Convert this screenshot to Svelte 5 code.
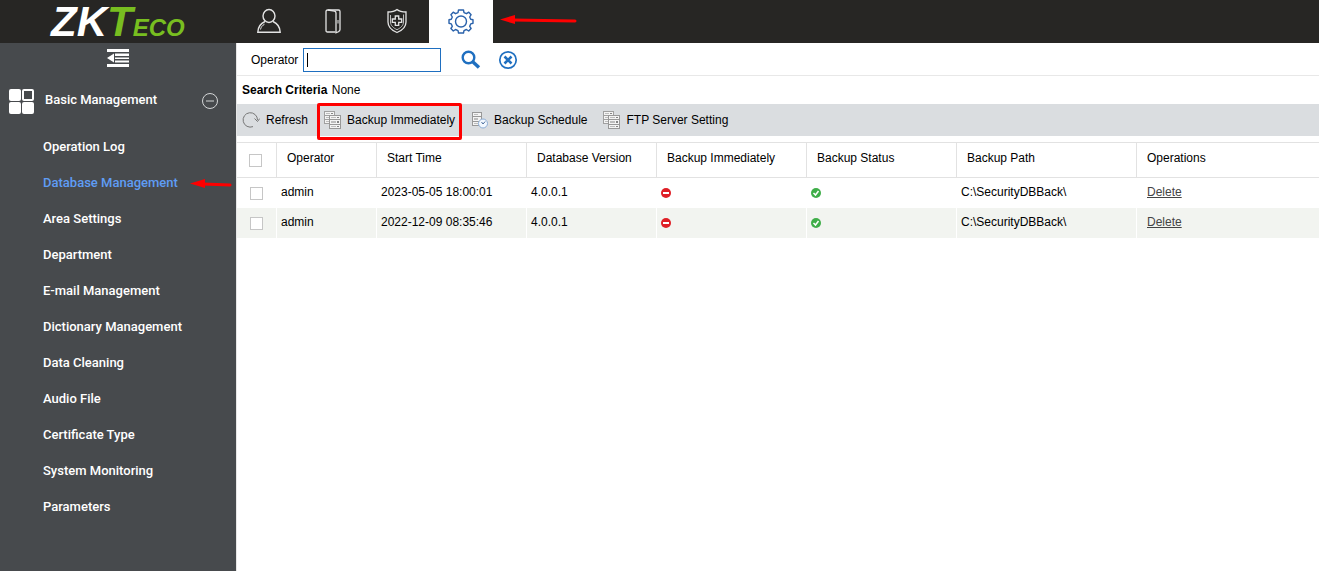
<script lang="ts">
  type BackupRow = {
    id: number;
    operator: string;
    startTime: string;
    version: string;
    path: string;
  };

  const menu = [
    "Operation Log",
    "Database Management",
    "Area Settings",
    "Department",
    "E-mail Management",
    "Dictionary Management",
    "Data Cleaning",
    "Audio File",
    "Certificate Type",
    "System Monitoring",
    "Parameters",
  ];

  const columns = [
    "Operator",
    "Start Time",
    "Database Version",
    "Backup Immediately",
    "Backup Status",
    "Backup Path",
    "Operations",
  ];

  let rows = $state<BackupRow[]>([
    { id: 1, operator: "admin", startTime: "2023-05-05 18:00:01", version: "4.0.0.1", path: "C:\\SecurityDBBack\\" },
    { id: 2, operator: "admin", startTime: "2022-12-09 08:35:46", version: "4.0.0.1", path: "C:\\SecurityDBBack\\" },
  ]);

  let activeItem = $state("Database Management");
  let expanded = $state(true);
  let operator = $state("");
  let focused = $state(false);
  let selected = $state<number[]>([]);

  function toggleAll(e: Event) {
    selected = (e.target as HTMLInputElement).checked ? rows.map((r) => r.id) : [];
  }

  function removeRow(e: MouseEvent, id: number) {
    e.preventDefault();
    rows = rows.filter((r) => r.id !== id);
  }
</script>

{#snippet serverIcon()}
  <svg width="17" height="18" viewBox="0 0 17 18">
    <path d="M0 0h11v13H0z" fill="#a0a0a0" />
    <path d="M1 1h9v3H1zM1 5h9v3H1zM1 9h9v3H1z" fill="#f4f4f4" />
    <path d="M2 2h4v1H2zM2 6h4v1H2zM2 10h4v1H2z" fill="#bdbdbd" />
    <path d="M7 2h2v1H7z" fill="#858585" />
    <path d="M5 4h12v14H5z" fill="#989898" />
    <path d="M6 5h10v3H6zM6 9h10v4H6zM6 14h10v3H6z" fill="#f4f4f4" />
    <path d="M7 6h5v1H7zM7 10h5v2H7zM7 15h5v1H7z" fill="#bdbdbd" />
    <path d="M13 6h2v1h-2zM13 10h2v2h-2zM13 15h2v1h-2z" fill="#858585" />
  </svg>
{/snippet}

{#snippet arrow(width: number)}
  <svg {width} height="12" viewBox="0 0 {width} 12">
    <path d="M13 6L{width - 2} 7" stroke="#fe0000" stroke-width="3" stroke-linecap="round" />
    <path d="M0 5.500L15 1v9z" fill="#fe0000" />
  </svg>
{/snippet}

<div class="page">
  <header class="topbar">
    <a class="logo" href="#home" aria-label="ZKTeco"><span class="zk">ZK</span><span class="t">T</span><span class="eco">ECO</span></a>
    <nav class="modules">
      <button aria-label="Personnel">
        <svg width="26" height="26" viewBox="0 0 26 26" fill="none" stroke="#e4e4e4" stroke-width="1.400">
          <ellipse cx="13" cy="8" rx="6" ry="6.500" />
          <path d="M9 13.500C4.500 15.500 2 19 1.800 24.200h22.400C24 19 21.500 15.500 17 13.500" />
          <path d="M4.500 21.500c.5-2.500 1.800-4 4-5.300" stroke-width="1" />
        </svg>
      </button>
      <button aria-label="Access">
        <svg width="18" height="26" viewBox="0 0 18 26" fill="none" stroke="#e4e4e4" stroke-width="1.300">
          <path d="M11.500 24H3.500Q2 24 2 22.500V3.500Q2 2 3.500 2H14.500q1.500 0 1.500 1.500v18q0 1.500-1.500 2" />
          <path d="M4 2l6.500 1.200q1.500.3 1.500 1.800V24.800l3-1.300" />
          <path d="M14 12v3.500" stroke-width="1" />
        </svg>
      </button>
      <button aria-label="Patrol">
        <svg width="22" height="26" viewBox="0 0 22 26" fill="none" stroke="#e4e4e4" stroke-width="1.300">
          <path d="M11 1.500C8.500 3.500 5 4 2 4v10c0 5 4 8.500 9 10.500 5-2 9-5.500 9-10.500V4c-3 0-6.500-.5-9-2.500z" />
          <path d="M4.500 7v7c0 3.500 3 6 6.500 7.700 3.500-1.700 6.500-4.200 6.500-7.700V6.500" stroke-width=".8" />
          <path d="M9.300 8h3.400v3h3v3.400h-3v3H9.300v-3h-3V11h3z" />
        </svg>
      </button>
      <button class="current" aria-label="System">
        <svg width="26" height="26" viewBox="0 0 26 26" fill="none" stroke="#2a62ab" stroke-width="1.400" stroke-linejoin="round">
          <path d="M10.500 2h5l.5 2.600 2.500 1.100 2.300-1.500 2.300 2.500-1.400 2.300 1 2.300 2.300.4v3.600l-2.300.6-1 2.400 1.400 2.200-2.400 2.500-2.300-1.500-2.400 1.100-.5 2.400h-5L10 22.600l-2.500-1.100L5.300 23l-2.400-2.500 1.400-2.200-1-2.400L1 15.300v-3.600l2.300-.4 1-2.300-1.400-2.300 2.300-2.500 2.300 1.500L10 4.600z" />
          <circle cx="13" cy="13.500" r="5.500" />
        </svg>
      </button>
      <span class="pointer">{@render arrow(77)}</span>
    </nav>
  </header>

  <div class="body">
    <aside>
      <button class="fold" aria-label="Collapse menu">
        <svg width="22" height="18" viewBox="0 0 22 18" fill="#fff">
          <path d="M0 0h22v3H0zM8 4.500h14V7H8zM8 8.500h14V10H8zM8 11.500h14V13.500H8zM0 15h22v3H0zM0 9l7-4.500v9z" />
        </svg>
      </button>
      <button class="group" aria-expanded={expanded} onclick={() => (expanded = !expanded)}>
        <svg width="25" height="25" viewBox="0 0 25 25" fill="#fff">
          <rect width="12" height="12" rx="2" />
          <rect y="13" width="12" height="12" rx="2" />
          <rect x="13" y="13" width="12" height="12" rx="2" />
          <rect x="14" y="1" width="10" height="10" rx="1" fill="none" stroke="#fff" stroke-width="2" />
        </svg>
        <span>Basic Management</span>
        <svg width="18" height="18" viewBox="0 0 18 18" fill="none" stroke="#d4d6d7">
          <circle cx="9" cy="9" r="7.500" />
          <path d="M5 9h8" />
        </svg>
      </button>
      {#if expanded}
        <ul>
          {#each menu as item}
            <li>
              <a
                href="#menu"
                class:active={item === activeItem}
                onclick={(e) => {
                  e.preventDefault();
                  activeItem = item;
                }}
              >{item}</a>
              {#if item === "Database Management"}
                <span class="pointer">{@render arrow(42)}</span>
              {/if}
            </li>
          {/each}
        </ul>
      {/if}
    </aside>

    <main>
      <form class="search" onsubmit={(e) => e.preventDefault()}>
        <label for="operator">Operator</label>
        <span class="field">
          <input
            id="operator"
            type="text"
            bind:value={operator}
            onfocus={() => (focused = true)}
            onblur={() => (focused = false)}
          />
          {#if !focused && !operator}<i class="caret"></i>{/if}
        </span>
        <button class="find" aria-label="Search">
          <svg width="20" height="20" viewBox="0 0 20 20" fill="none" stroke="#1f6fc0">
            <circle cx="7.500" cy="7.500" r="5.800" stroke-width="2.400" />
            <path d="M12 12l6 5.500" stroke-width="3.400" />
          </svg>
        </button>
        <button type="button" aria-label="Clear" onclick={() => (operator = "")}>
          <svg width="20" height="20" viewBox="0 0 20 20" fill="none" stroke="#1f6fc0">
            <circle cx="10" cy="10" r="8.200" stroke-width="1.700" />
            <path d="M6.500 6.500l7 7M13.500 6.500l-7 7" stroke-width="2.600" />
          </svg>
        </button>
      </form>

      <p class="criteria"><b>Search Criteria</b> <span>None</span></p>

      <div class="toolbar">
        <button>
          <svg width="18" height="18" viewBox="0 0 18 18" fill="none" stroke="#777">
            <path d="M11 15.600A7.200 7.200 0 1 1 15.500 9" />
            <path d="M12.500 7.500l3 3 2.300-3" />
          </svg>
          Refresh
        </button>
        <button class="marked">{@render serverIcon()} Backup Immediately</button>
        <button>
          <svg width="17" height="18" viewBox="0 0 17 18">
            <path d="M1 1h10v14H1z" fill="#989898" />
            <path d="M2 2h8v3H2zM2 6h8v4H2zM2 11h8v3H2z" fill="#f4f4f4" />
            <path d="M3 3h4v1H3zM3 7h4v2H3zM3 12h4v1H3z" fill="#bdbdbd" />
            <circle cx="12" cy="12.500" r="4.500" fill="#f2f8fe" stroke="#8cadd5" />
            <path d="M10.500 11l1.500 2 2.200-2.500" fill="none" stroke="#4c6f9f" />
          </svg>
          Backup Schedule
        </button>
        <button>{@render serverIcon()} FTP Server Setting</button>
      </div>

      <table>
        <colgroup>
          <col class="w-check" />
          <col class="w-operator" />
          <col class="w-wide" />
          <col class="w-version" />
          <col class="w-wide" />
          <col class="w-wide" />
          <col class="w-path" />
          <col />
        </colgroup>
        <thead>
          <tr>
            <th>
              <input
                type="checkbox"
                aria-label="Select all"
                checked={rows.length > 0 && selected.length === rows.length}
                onchange={toggleAll}
              />
            </th>
            {#each columns as column}
              <th>{column}</th>
            {/each}
          </tr>
        </thead>
        <tbody>
          {#each rows as row (row.id)}
            <tr>
              <td class="check">
                <input type="checkbox" aria-label="Select row" value={row.id} bind:group={selected} />
              </td>
              <td>{row.operator}</td>
              <td>{row.startTime}</td>
              <td>{row.version}</td>
              <td>
                <svg width="10" height="10" viewBox="0 0 10 10" role="img" aria-label="No">
                  <circle cx="5" cy="5" r="5" fill="#df1f26" />
                  <path d="M2 4h6v2H2z" fill="#fff" />
                </svg>
              </td>
              <td>
                <svg width="10" height="10" viewBox="0 0 10 10" role="img" aria-label="Success">
                  <circle cx="5" cy="5" r="5" fill="#3fae49" />
                  <path d="M2.500 5l2 2 3-4" fill="none" stroke="#fff" stroke-width="1.500" />
                </svg>
              </td>
              <td>{row.path}</td>
              <td class="ops"><a href="#delete" onclick={(e) => removeRow(e, row.id)}>Delete</a></td>
            </tr>
          {/each}
        </tbody>
      </table>
    </main>
  </div>
</div>

<style>
  :global(body) {
    margin: 0;
    background: #fff;
  }

  .page {
    display: flex;
    flex-direction: column;
    min-height: 100vh;
    font: 12px/16px "Liberation Sans", Arial, sans-serif;
    color: #000;
  }

  button {
    margin: 0;
    padding: 0;
    border: 0;
    background: none;
    color: inherit;
    font: inherit;
    cursor: pointer;
  }

  svg {
    display: block;
    flex: none;
  }

  .topbar {
    display: flex;
    height: 43px;
    background: #272624;
  }

  .logo {
    box-sizing: border-box;
    width: 237px;
    padding-left: 51px;
    font-size: 42px;
    line-height: 43px;
    font-weight: bold;
    font-style: italic;
    text-decoration: none;
    white-space: nowrap;
  }

  .zk { color: #fff; }
  .t, .eco { color: #78be20; }

  .eco {
    font-size: 24px;
    line-height: 24px;
  }

  .modules {
    display: flex;
    align-items: stretch;
  }

  .modules button {
    display: flex;
    align-items: center;
    justify-content: center;
    width: 64px;
    padding-bottom: 2px;
  }

  .modules .current { background: #fff; }

  .modules .pointer {
    align-self: center;
    padding: 0 0 4px 7px;
  }

  .body {
    display: flex;
    flex: 1;
  }

  aside {
    flex: none;
    width: 236px;
    background: #474a4d;
    color: #fff;
    font: 500 13px/16px Roboto, "Liberation Sans", sans-serif;
  }

  .fold {
    display: block;
    margin: 0 auto;
    padding: 6px 0 7px;
  }

  .group {
    display: flex;
    align-items: center;
    gap: 11px;
    width: 100%;
    height: 54px;
    padding: 0 17px 0 9px;
    text-align: left;
  }

  .group span {
    flex: 1;
    padding-bottom: 3px;
  }

  aside ul {
    margin: 1px 0 0;
    padding: 0;
    list-style: none;
  }

  aside li {
    display: flex;
    align-items: center;
    height: 36px;
    padding-left: 43px;
    position: relative;
  }

  aside a {
    color: #fff;
    text-decoration: none;
  }

  aside a.active { color: #5f9df5; }

  aside .pointer {
    position: absolute;
    right: 4px;
    top: 13px;
  }

  main {
    flex: 1;
    min-width: 0;
    border-left: 1px solid #e6e6e6;
  }

  .search {
    display: flex;
    align-items: center;
    box-sizing: border-box;
    height: 33px;
    padding: 2px 14px 0;
    border-bottom: 1px solid #e8e8e8;
  }

  .field {
    position: relative;
    margin: 0 20px 0 5px;
  }

  .search input {
    display: block;
    box-sizing: border-box;
    width: 138px;
    height: 24px;
    padding: 0 4px;
    border: 1px solid #1f6fc0;
    outline: none;
    font: inherit;
  }

  .caret {
    position: absolute;
    left: 4px;
    top: 5px;
    width: 1px;
    height: 14px;
    background: #000;
  }

  .find { margin-right: 17px; }

  .criteria {
    margin: 0;
    padding: 6px 5px;
  }

  .criteria span { margin-left: 1px; }

  .toolbar {
    display: flex;
    align-items: center;
    gap: 16px;
    height: 32px;
    padding: 0 5px;
    background: #dadde0;
  }

  .toolbar button {
    display: flex;
    align-items: center;
    gap: 6px;
    position: relative;
  }

  .marked::after {
    content: "";
    position: absolute;
    inset: -8px -7px -11px;
    border: 3px solid #fe0000;
    border-radius: 2px;
  }

  table {
    width: 100%;
    margin-top: 6px;
    table-layout: fixed;
    border-collapse: separate;
    border-spacing: 0;
  }

  .w-check { width: 40px; }
  .w-operator { width: 100px; }
  .w-wide { width: 150px; }
  .w-version { width: 130px; }
  .w-path { width: 180px; }

  th, td {
    box-sizing: border-box;
    font-weight: normal;
    text-align: left;
    white-space: nowrap;
  }

  th {
    height: 36px;
    padding: 0 10px 5px;
    border: solid #e2e2e2;
    border-width: 1px 1px 1px 0;
  }

  th:first-child {
    padding: 0 12px;
  }

  td {
    height: 30px;
    padding: 0 4px 2px;
    border-right: 1px solid #fff;
  }

  th:last-child, td:last-child { border-right: 0; }

  tbody tr:nth-child(even) { background: #f2f4f0; }

  td.check { padding: 0 13px; }
  td.ops { padding-left: 10px; }
  td svg { margin-top: 2px; }
  td a { color: #444; }

  table input {
    display: block;
    appearance: none;
    width: 13px;
    height: 13px;
    margin: 0;
    border: 1px solid #c6c6c6;
    background: #fff;
  }

  table input:checked { background: #1f6fc0; }
</style>
